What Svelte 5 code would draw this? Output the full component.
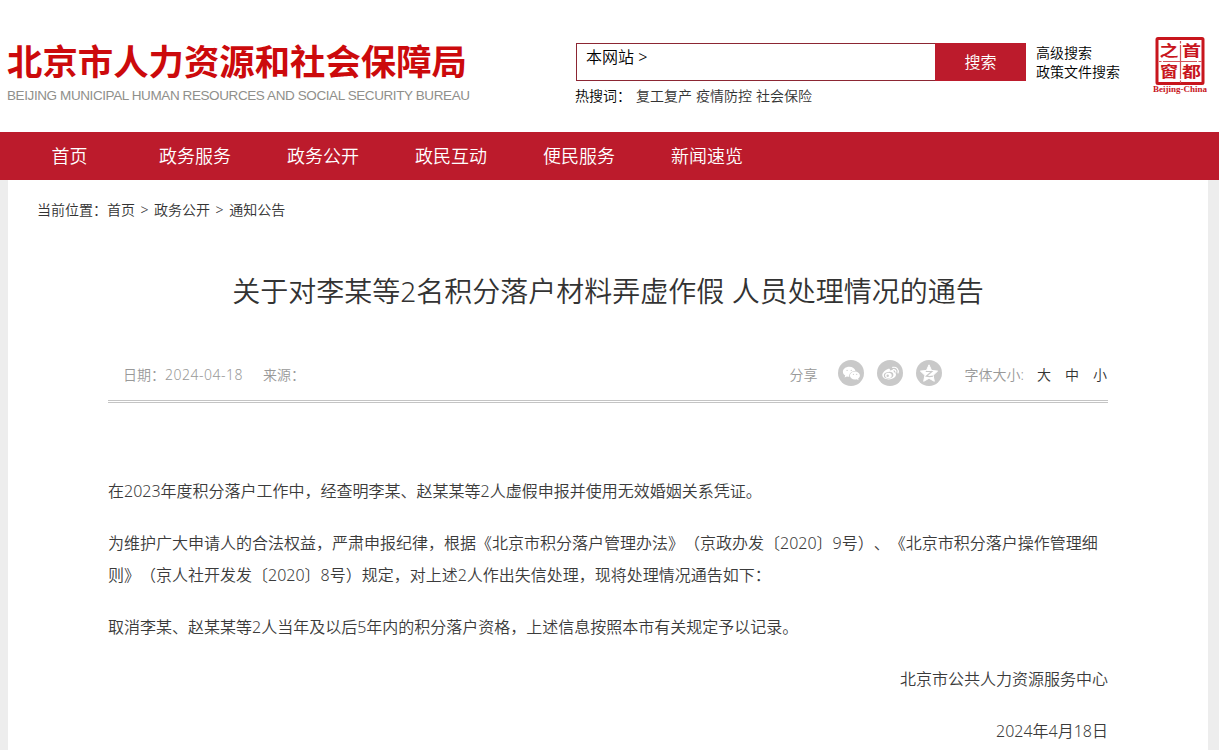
<script lang="ts">
	const navItems = ['首页', '政务服务', '政务公开', '政民互动', '便民服务', '新闻速览'];
	const hotWords = ['复工复产', '疫情防控', '社会保险'];
	const sizes = ['大', '中', '小'];

	const paragraphs = [
		'在2023年度积分落户工作中，经查明李某、赵某某等2人虚假申报并使用无效婚姻关系凭证。',
		'为维护广大申请人的合法权益，严肃申报纪律，根据《北京市积分落户管理办法》（京政办发〔2020〕9号）、《北京市积分落户操作管理细则》（京人社开发发〔2020〕8号）规定，对上述2人作出失信处理，现将处理情况通告如下：',
		'取消李某、赵某某等2人当年及以后5年内的积分落户资格，上述信息按照本市有关规定予以记录。'
	];
</script>

<header class="header">
	<svg class="logo" width="480" height="132" viewBox="0 0 480 132">
		<text class="logo-cn" x="7" y="75" textLength="460" lengthAdjust="spacingAndGlyphs">北京市人力资源和社会保障局</text>
		<text class="logo-en" x="7" y="100" textLength="463" lengthAdjust="spacing">BEIJING MUNICIPAL HUMAN RESOURCES AND SOCIAL SECURITY BUREAU</text>
	</svg>

	<div class="search">
		<div class="search-bar">
			<div class="search-input">本网站 &gt;</div>
			<button class="search-btn" type="button">搜索</button>
		</div>
		<div class="hot">
			<span class="hot-label">热搜词：</span>
			{#each hotWords as word}
				<a class="hot-word" href="#top">{word}</a>
			{/each}
		</div>
	</div>

	<div class="advanced">
		<a href="#top">高级搜索</a>
		<a href="#top">政策文件搜索</a>
	</div>

	<svg class="seal" width="58" height="62" viewBox="0 0 58 62">
		<rect x="5" y="3.5" width="46" height="45" rx="1" fill="#fff" stroke="#c8161d" stroke-width="3" />
		<path d="M28.5 6v2.5M28.5 10v34M28.5 45.5v2.5M7 26.5h2.5M11 26.5h34M46.5 26.5h3" stroke="#d4555a" stroke-width="1.2" fill="none" />
		<g class="seal-cn">
			<text x="7.5" y="20.5" textLength="19" lengthAdjust="spacingAndGlyphs">之</text>
			<text x="30" y="20.5" textLength="19" lengthAdjust="spacingAndGlyphs">首</text>
			<text x="8" y="42" textLength="18" lengthAdjust="spacingAndGlyphs">窗</text>
			<text x="30" y="42" textLength="19" lengthAdjust="spacingAndGlyphs">都</text>
		</g>
		<text class="seal-en" x="1" y="56.5" textLength="54" lengthAdjust="spacingAndGlyphs">Beijing-China</text>
	</svg>
</header>

<nav class="nav">
	{#each navItems as item}
		<a class="nav-item" href="#top">{item}</a>
	{/each}
</nav>

<main class="page">
	<div class="crumbs">当前位置：<a href="#top">首页</a> &gt; <a href="#top">政务公开</a> &gt; <a href="#top">通知公告</a></div>

	<h1 class="title">关于对李某等2名积分落户材料弄虚作假 人员处理情况的通告</h1>

	<article class="article">
		<div class="meta">
			<span class="date">日期：<span class="date-value">2024-04-18</span></span>
			<span class="source">来源：</span>
			<span class="share-label">分享</span>
			<div class="share">
				<svg width="26" height="26" viewBox="0 0 26 26">
					<circle cx="13" cy="13" r="13" fill="#c9c9c9" />
					<path d="M11.3 6.8c-3.6 0-6.4 2.2-6.4 5 0 1.6.9 2.9 2.3 3.8l-.6 2 2.3-1.2c.8.2 1.6.4 2.4.4-.5-3.3 2.4-5.8 6.2-5.7-.6-2.6-3-4.3-6.2-4.3z" fill="#fff" />
					<path d="M16.9 11.6c-2.9 0-5 1.8-5 4s2.1 4 5 4c.7 0 1.3-.1 1.9-.3l1.8 1-.5-1.7c1.1-.7 1.8-1.8 1.8-3 0-2.2-2.3-4-5-4z" fill="#fff" />
					<g fill="#d2d2d2">
						<circle cx="9.1" cy="10.4" r=".7" />
						<circle cx="13.3" cy="10.4" r=".7" />
						<circle cx="15.4" cy="14.4" r=".6" />
						<circle cx="18.7" cy="14.4" r=".6" />
					</g>
				</svg>
				<svg width="26" height="26" viewBox="0 0 26 26">
					<circle cx="13" cy="13" r="13" fill="#c9c9c9" />
					<path d="M10.9 9c1.4-.6 2.4-.1 2 1.6 2.4-1 4.5-.6 3.8 1.4 1.5.5 2.3 1.3 2.3 2.6 0 2.7-3.5 4.9-7.3 4.9-3.6 0-6.4-1.7-6.4-4.4 0-2.2 2.8-5.1 5.600-6.100z" fill="#fff" />
					<ellipse cx="11.6" cy="15.2" rx="4.8" ry="3.3" transform="rotate(-8 11.6 15.2)" fill="#c9c9c9" />
					<ellipse cx="11.4" cy="15.4" rx="3.3" ry="2.6" fill="#fff" />
					<circle cx="10.7" cy="15.8" r="1.2" fill="#c9c9c9" />
					<path d="M15.7 7.4c3.7-.8 6.400 2 5.300 5.600M16.200 9.700c1.800-.3 3 .9 2.600 2.500" fill="none" stroke="#fff" stroke-width="1.2" stroke-linecap="round" />
				</svg>
				<svg width="26" height="26" viewBox="0 0 26 26">
					<circle cx="13" cy="13" r="13" fill="#c9c9c9" />
					<path d="M13 4.8l2.5 5.6 6.1.7-4.5 4.2 1.2 6-5.3-3-5.3 3 1.2-6-4.5-4.2 6.100-.7z" fill="#fff" stroke="#fff" stroke-linejoin="round" />
					<path d="M9.8 11.5h6l-5.500 4.700c2.200.5 4.400.5 6.600 0" fill="none" stroke="#c9c9c9" stroke-width="1.2" />
				</svg>
			</div>
			<span class="size-label">字体大小:</span>
			<div class="sizes">
				{#each sizes as size}
					<a href="#top">{size}</a>
				{/each}
			</div>
		</div>

		<div class="content">
			{#each paragraphs as text}
				<p>{text}</p>
			{/each}
			<p class="sign">北京市公共人力资源服务中心</p>
			<p class="sign">2024年4月18日</p>
		</div>
	</article>
</main>

<style>
	:global(body) {
		background: #ededed;
		overflow: hidden;
		font-family: 'Noto Sans', 'Noto Sans CJK SC', sans-serif;
		font-size: 14px;
		font-weight: 350;
		color: #333;
		text-spacing-trim: space-all;
	}

	a {
		color: inherit;
		text-decoration: none;
	}

	.header {
		display: flex;
		height: 132px;
		background: #fff;
	}

	.logo {
		flex: none;
		margin-right: 96px;
	}

	.logo-cn {
		font-family: 'Noto Sans CJK SC', sans-serif;
		font-size: 35px;
		font-weight: 700;
		fill: #cc0a0c;
	}

	.logo-en {
		font-family: 'Liberation Sans', sans-serif;
		font-size: 13.5px;
		fill: #8f8f8b;
	}

	.search {
		width: 450px;
		padding-top: 43px;
	}

	.search-bar {
		display: flex;
		height: 38px;
	}

	.search-input {
		box-sizing: border-box;
		width: 359px;
		height: 38px;
		padding-left: 9px;
		border: 1px solid #8c2633;
		border-right: none;
		font-size: 16px;
		line-height: 27px;
		color: #000;
	}

	.search-btn {
		width: 91px;
		height: 38px;
		padding: 0 0 3px;
		border: none;
		background: #bc1b2c;
		color: #fff;
		font: inherit;
		font-size: 16px;
	}

	.hot {
		display: flex;
		gap: 4px;
		margin: 5px 0 0 -1px;
		line-height: 20px;
	}

	.hot-label {
		margin-right: 1px;
		color: #000;
	}

	.advanced {
		display: flex;
		flex-direction: column;
		width: 116px;
		margin-left: 10px;
		padding-top: 43px;
		line-height: 19px;
		color: #000;
	}

	.seal {
		margin-top: 35px;
	}

	.seal-cn {
		font-size: 15px;
		font-weight: 700;
		fill: #c8161d;
	}

	.seal-en {
		font-family: 'Liberation Serif', serif;
		font-size: 7.5px;
		font-weight: 700;
		fill: #c8161d;
	}

	.nav {
		display: flex;
		height: 48px;
		padding-left: 8px;
		background: #bc1b2c;
	}

	.nav-item {
		width: 128px;
		font-size: 18px;
		line-height: 49px;
		text-align: center;
		color: #fff;
	}

	.nav-item:first-child {
		width: 123px;
	}

	.page {
		box-sizing: border-box;
		width: 1200px;
		min-height: 570px;
		margin-left: 8px;
		padding-top: 20px;
		background: #fff;
	}

	.crumbs {
		padding-left: 29px;
		line-height: 20px;
		word-spacing: 1.9px;
	}

	.title {
		margin: 51px 0 0;
		font-size: 28px;
		font-weight: 350;
		line-height: 40px;
		text-align: center;
	}

	.article {
		width: 1000px;
		margin: 0 auto;
	}

	.meta {
		display: flex;
		align-items: center;
		box-sizing: border-box;
		height: 56px;
		margin-top: 36px;
		padding-left: 15px;
		border-bottom: 3px double #c4c4c4;
		color: #999;
	}

	.date-value {
		letter-spacing: 0.5px;
	}

	.source {
		margin-left: 20px;
	}

	.share-label {
		margin-left: auto;
	}

	.share {
		display: flex;
		gap: 13px;
		margin: 0 23px 1px 20px;
	}

	.sizes {
		display: flex;
		gap: 14px;
		margin: 0 1px 0 13px;
		color: #333;
	}

	.content {
		padding-top: 72px;
		font-size: 16px;
		line-height: 32px;
		color: #3b3b3b;
	}

	.content p {
		margin: 0 0 20px;
	}

	.content .sign {
		text-align: right;
	}
</style>
